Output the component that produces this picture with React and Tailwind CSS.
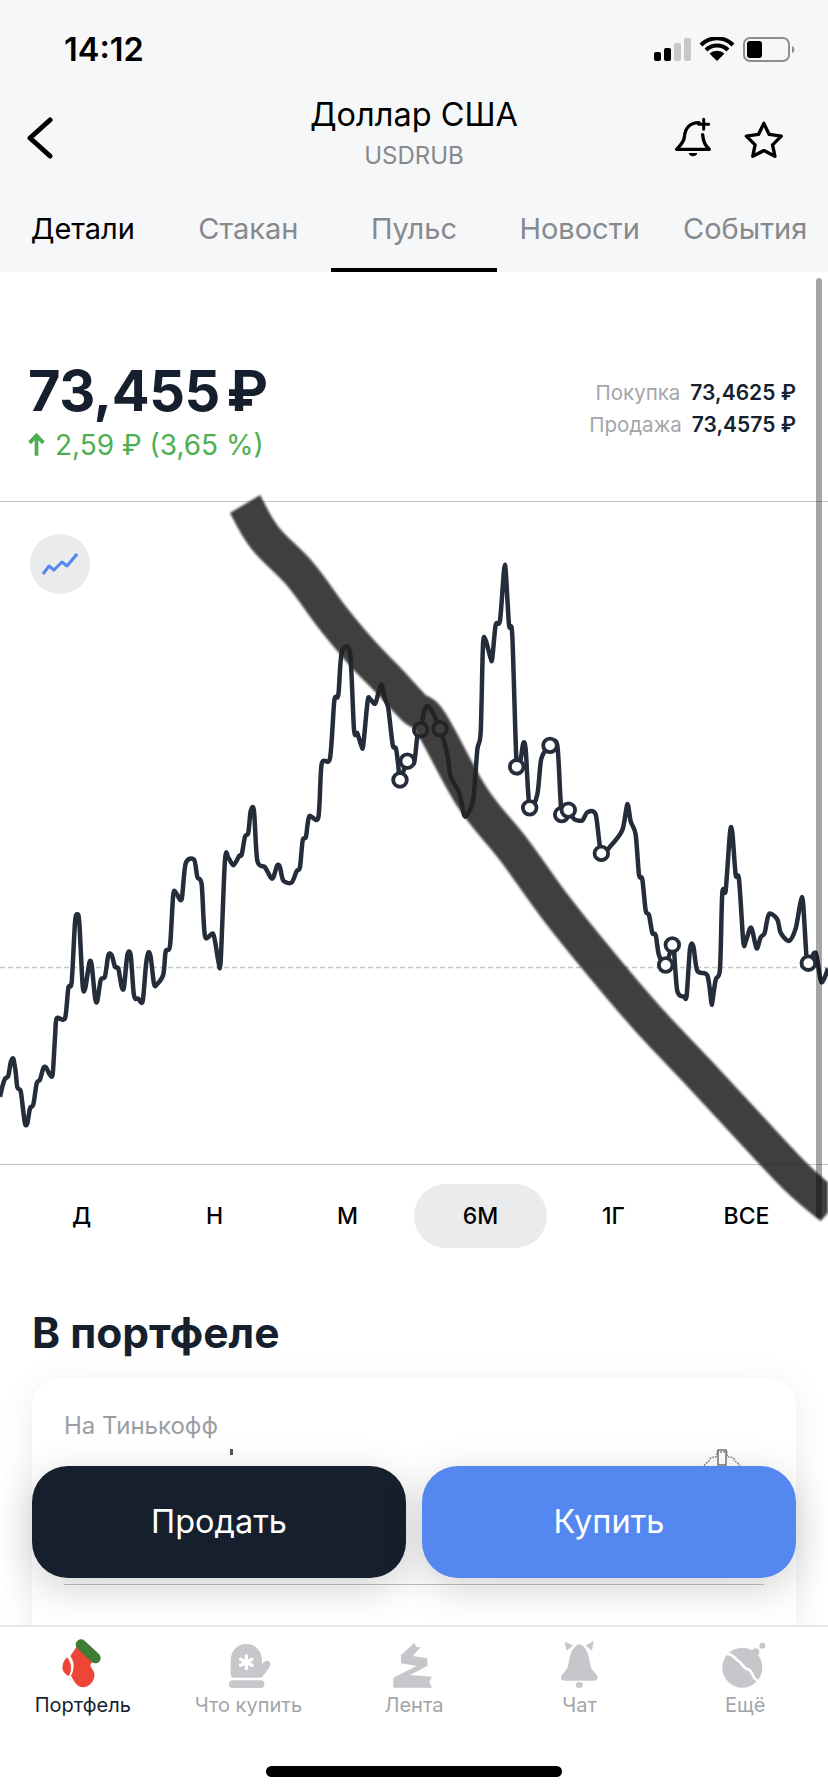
import React from "react";

const z5 = [[0,1455],[8,1425],[15,1408],[25,1400],[32,1365],[40,1355],[47,1390],[52,1430],[62,1440],[68,1480],[75,1525],[82,1525],[90,1485],[100,1475],[110,1420],[120,1410],[130,1380],[138,1378],[150,1398],[158,1395],[165,1300],[170,1250],[195,1250],[205,1170],[215,1155],[225,1000],[232,978],[238,1000],[248,1165],[256,1170],[268,1105],[275,1110],[285,1195],[292,1205],[302,1150],[315,1140],[325,1085],[335,1085],[345,1115],[355,1120],[365,1168],[372,1168],[382,1085],[392,1085],[402,1190],[415,1198],[428,1205],[438,1110],[445,1078],[452,1090],[462,1160],[470,1162],[490,1135],[497,1075],[510,1060],[520,925],[530,925],[545,938],[557,845],[582,835],[592,880],[605,900],[615,1035],[640,1030],[655,1100],[662,1100],[675,835],[685,830],[700,850],[718,825],[725,822],[735,775],[745,765],[752,708],[762,708],[772,838],[795,855],[812,882],[820,882],[832,850],[840,855],[850,890],[875,895],[890,865],[900,855],[908,785],[918,775],[928,722],[955,725],[965,585],[990,570],[1003,420],[1015,405],[1025,295],[1050,295],[1062,495],[1072,505],[1085,540],[1090,535],[1103,420],[1110,415],[1125,428],[1135,400],[1145,378],[1155,415],[1165,440],[1178,535],[1188,545],[1195,590],[1200,627],[1222,578]];
const z6 = [[0,500],[10,440],[20,425],[30,385],[40,372],[55,385],[78,423],[100,480],[110,530],[135,565],[150,615],[160,615],[178,580],[190,470],[200,430],[207,235],[215,225],[230,265],[235,265],[245,190],[258,180],[270,68],[275,68],[285,190],[295,215],[308,508],[320,490],[328,455],[335,470],[347,600],[370,570],[382,490],[408,460],[430,460],[443,615],[463,605],[480,625],[505,628],[520,610],[545,615],[562,702],[590,685],[625,650],[640,592],[650,630],[665,660],[675,750],[685,760],[695,830],[705,840],[715,880],[725,885],[735,930],[755,952],[775,907],[780,920],[790,1010],[810,1023],[818,1020],[828,915],[838,910],[850,965],[880,975],[892,1035],[895,1035],[905,985],[918,960],[925,790],[935,785],[948,655],[955,655],[965,750],[975,760],[988,900],[995,900],[1008,870],[1015,875],[1028,915],[1040,890],[1052,880],[1065,838],[1090,850],[1100,880],[1125,898],[1145,870],[1160,810],[1167,810],[1178,940],[1183,948],[1205,925],[1222,990],[1242,960]];
const m5 = ([x, y]) => [x / 3, 540 + y / 2.613];
const m6 = ([x, y]) => [414 + x / 3, 540 + y / 2.24];
const chartPts = [...z5.map(m5), ...z6.map(m6)];
const circles = [[1200,627],[1222,578]].map(m5).concat([[20,425],[78,423],[308,508],[347,600],[408,460],[443,615],[463,605],[562,702],[755,952],[775,907],[1183,948]].map(m6));
const markerPts = [[245,504],[265,538],[300,574],[332,617],[362,653],[390,682],[414,708],[431,723],[472,797],[514,850],[556,908],[601,964],[647,1018],[697,1071],[747,1125],[797,1178],[832,1208]];

function smooth(pts, t = 0.14) {
  let d = `M${pts[0][0].toFixed(1)} ${pts[0][1].toFixed(1)}`;
  for (let i = 0; i < pts.length - 1; i++) {
    const p0 = pts[Math.max(0, i - 1)], p1 = pts[i], p2 = pts[i + 1], p3 = pts[Math.min(pts.length - 1, i + 2)];
    const c1 = [p1[0] + (p2[0] - p0[0]) * t, p1[1] + (p2[1] - p0[1]) * t];
    const c2 = [p2[0] - (p3[0] - p1[0]) * t, p2[1] - (p3[1] - p1[1]) * t];
    d += `C${c1[0].toFixed(1)} ${c1[1].toFixed(1)} ${c2[0].toFixed(1)} ${c2[1].toFixed(1)} ${p2[0].toFixed(1)} ${p2[1].toFixed(1)}`;
  }
  return d;
}

const Gray = "#c5c7ca";
const NavSvg = ({ vb, children }) => (
  <svg width="60" height="56" viewBox={vb}>{children}</svg>
);

const navItems = [
  { label: "Портфель", active: true, icon: (
    <NavSvg vb="8 12 180 168">
      <path d="M82 46L126 96C112 108 128 115 132 130C135 155 115 172 98 172C80 172 72 155 62 138C74 115 72 95 60 78Z" fill="#ee4536" />
      <path d="M50 82C38 92 32 115 40 125C45 132 50 136 56 138C66 118 64 98 50 82Z" fill="#ee4536" />
      <path d="M92 44L135 84" stroke="#3f7d35" strokeWidth="32" strokeLinecap="round" />
    </NavSvg>
  )},
  { label: "Что купить", icon: (
    <NavSvg vb="505 12 180 168">
      <path d="M543 133V92C543 60 565 42 590 42C615 42 636 60 637 92V104C645 88 662 90 662 102C662 112 650 126 640 137C638 141 634 143 630 143H552C546 143 543 139 543 133Z" fill={Gray} />
      <rect x="538" y="151" width="106" height="23" rx="11.5" fill={Gray} />
      <path d="M590 78V116M573 88L607 106M573 106L607 88" stroke="#fff" strokeWidth="10" strokeLinecap="round" />
    </NavSvg>
  )},
  { label: "Лента", icon: (
    <NavSvg vb="42 12 180 168">
      <path d="M133 38L138 50L152 52L128 78L172 85V108L120 135L186 140L178 155L186 173H70V143L140 108L93 100V75Z" fill={Gray} />
    </NavSvg>
  )},
  { label: "Чат", icon: (
    <NavSvg vb="539 12 180 168">
      <path d="M627 42C650 50 655 75 660 105C663 125 682 130 682 143C682 150 675 152 670 152H584C577 152 571 150 572 143C572 130 590 125 594 105C598 75 605 50 627 42Z" fill={Gray} />
      <ellipse cx="627" cy="165" rx="11" ry="9" fill={Gray} />
      <path d="M585 37L606 47L590 60ZM668 35L648 47L664 60Z" fill={Gray} stroke={Gray} strokeWidth="3" strokeLinejoin="round" />
    </NavSvg>
  )},
  { label: "Ещё", icon: (
    <NavSvg vb="1036 12 180 168">
      <circle cx="1118" cy="113" r="60" fill={Gray} />
      <circle cx="1158" cy="66" r="11" fill={Gray} />
      <circle cx="1178" cy="47" r="9" fill={Gray} />
      <path d="M1068 72C1090 70 1095 85 1105 92C1120 100 1118 115 1135 118C1150 122 1145 140 1160 150L1172 158" fill="none" stroke="#fff" strokeWidth="8" />
    </NavSvg>
  )},
];

const tabs = ["Детали", "Стакан", "Пульс", "Новости", "События"];
const ranges = ["Д", "Н", "М", "6М", "1Г", "ВСЕ"];

export default function App() {
  return (
    <div className="relative w-[828px] h-[1792px] overflow-hidden bg-white flex flex-col font-['Inter',sans-serif] text-[#161f2d]">
      <header className="bg-[#f6f7f9] shrink-0">
        <div className="h-[96px] flex items-center justify-between pl-[64px] pr-[14px]">
          <span className="text-[32.5px] font-semibold leading-none text-black pt-[4px]">14:12</span>
          <svg width="160" height="28" viewBox="0 0 160 28" className="mt-[6px]">
            <rect x="0" y="15" width="7" height="9" rx="2" fill="#000" />
            <rect x="10" y="11" width="7" height="13" rx="2" fill="#000" />
            <rect x="20" y="6" width="7" height="18" rx="2" fill="#c6c7c9" />
            <rect x="30" y="1" width="7" height="23" rx="2" fill="#c6c7c9" />
            <path d="M47 8C56 -1 70 -1 79 8M52 13C58 7 68 7 74 13M57 18C60 15 66 15 69 18" fill="none" stroke="#000" strokeWidth="4" />
            <path d="M58 19L63 24L68 19C65 16 61 16 58 19Z" fill="#000" />
            <rect x="90" y="1" width="45" height="23" rx="6" fill="none" stroke="#8e8e8e" strokeWidth="2" />
            <rect x="93" y="4" width="15" height="17" rx="3" fill="#000" />
            <path d="M138 9C141 10 141.500 15 138 16Z" fill="#8e8e8e" />
          </svg>
        </div>
        <div className="h-[84px] grid grid-cols-[1fr_auto_1fr] items-center pl-[27px] pr-[43px]">
          <svg width="26" height="42" viewBox="0 0 26 42" className="mb-[6px]">
            <path d="M23 3L3 21L23 39" fill="none" stroke="#000" strokeWidth="5" strokeLinecap="round" strokeLinejoin="round" />
          </svg>
          <div className="flex flex-col items-center pb-[14px] mr-[-16px]">
            <div className="text-[32.5px] leading-[38px] text-black">Доллар США</div>
            <div className="text-[24px] leading-[30px] text-[#87898c] mt-[7px]">USDRUB</div>
          </div>
          <div className="flex justify-end items-center gap-[30px] pb-[2px]">
            <svg width="40" height="44" viewBox="90 290 120 130" className="mb-[5px]">
              <path d="M168 312C140 312 126 330 124 355C122 375 107 382 101 392H199C190 382 181 375 179 348" fill="none" stroke="#000" strokeWidth="10" strokeLinecap="round" strokeLinejoin="round" />
              <path d="M182 302V332M167 317H197" stroke="#000" strokeWidth="9" strokeLinecap="round" />
              <path d="M137 403H163C160 416 140 416 137 403Z" fill="#000" />
            </svg>
            <svg width="42" height="41" viewBox="310 295 125 120">
              <path d="M372 307L388 340L424 345L398 371L405 405L372 388L339 405L346 371L320 345L356 340Z" fill="none" stroke="#000" strokeWidth="10" strokeLinejoin="round" />
            </svg>
          </div>
        </div>
        <div className="h-[92px] grid grid-cols-5">
          {tabs.map((t, i) => (
            <div key={t} className={`flex items-center justify-center pt-[10px] border-b-4 text-[29px] ${i === 2 ? "border-black text-[#87898c]" : "border-transparent"} ${i === 0 ? "text-black" : "text-[#87898c]"}`}>{t}</div>
          ))}
        </div>
      </header>

      <main className="flex-1 min-h-0 overflow-hidden">
        <section className="h-[229px] flex justify-between pl-[28px] pr-[32px] pt-[85px]">
          <div>
            <div className="text-[56px] leading-[68px] font-bold [word-spacing:-6px] tracking-[-0.5px]">73,455 ₽</div>
            <div className="flex items-center gap-[10px] text-[28px] leading-[36px] text-[#4caf50] mt-[2px]">
              <svg width="17" height="24" viewBox="0 0 16 22" className="shrink-0">
                <path d="M8 21V3M1.500 9L8 2L14.500 9" fill="none" stroke="#4caf50" strokeWidth="3.500" />
              </svg>
              <span>2,59 ₽ (3,65 %)</span>
            </div>
          </div>
          <div className="flex flex-col gap-[4px] pt-[22px] text-[20.5px] leading-[28px]">
            <div className="flex justify-end gap-[10px]"><span className="text-[#a3a6a9]">Покупка</span><span className="font-semibold text-[21px]">73,4625 ₽</span></div>
            <div className="flex justify-end gap-[10px]"><span className="text-[#a3a6a9]">Продажа</span><span className="font-semibold text-[21px]">73,4575 ₽</span></div>
          </div>
        </section>

        <section className="relative h-[664px] border-y border-[#c4c4c4]">
          <div className="absolute left-[30px] top-[32px] w-[60px] h-[60px] rounded-full bg-[#e9ebed] flex items-center justify-center">
            <svg width="36" height="24" viewBox="0 0 36 24">
              <path d="M1 22L7 14L12 18L20 10L25 14L35 2" fill="none" stroke="#5487f0" strokeWidth="3" strokeLinejoin="round" />
            </svg>
          </div>
          <svg width="828" height="662" viewBox="0 502 828 662" className="block">
            <path d="M0 967.500H828" stroke="#c8c8c8" strokeWidth="1.500" strokeDasharray="5 3" />
            <path d={smooth(chartPts)} fill="none" stroke="#252d3b" strokeWidth="4.500" strokeLinejoin="round" />
            {circles.map(([x, y], i) => (
              <circle key={i} cx={x} cy={y} r="6.800" fill="#fff" stroke="#252d3b" strokeWidth="3.800" />
            ))}
          </svg>
        </section>

        <section className="grid grid-cols-6 px-[15px] pt-[19px]">
          {ranges.map((r) => (
            <div key={r} className={`h-[64px] flex items-center justify-center text-[23px] font-medium text-black rounded-full ${r === "6М" ? "bg-[#e9ebed]" : ""}`}>{r}</div>
          ))}
        </section>

        <section className="px-[32px]">
          <h2 className="mt-[60px] text-[42.5px] leading-[50px] font-bold">В портфеле</h2>
          <div className="mt-[20px] h-[330px] rounded-[28px] bg-white shadow-[0_6px_36px_rgba(0,0,0,0.08)] px-[32px] pt-[32px]">
            <div className="text-[24px] leading-[32px] text-[#9a9ea3]">На Тинькофф</div>
            <div className="flex justify-between h-[142px] pt-[7px] pl-[166px] pr-[22px]">
              <div className="w-[3px] h-[6px] bg-[#555]" />
              <svg width="40" height="22" viewBox="0 0 40 22">
                <path d="M2 20C1 14 7 14 8 10C10 7 14 9 15 7V3H25V7C26 9 30 7 32 10C33 14 39 14 38 20" fill="none" stroke="#888" strokeWidth="1.500" strokeDasharray="2 1" />
                <rect x="16" y="1" width="8" height="15" fill="none" stroke="#777" strokeWidth="1.500" />
              </svg>
            </div>
            <div className="border-t border-[#c0c0c0]" />
          </div>
        </section>
      </main>

      <nav className="shrink-0 h-[167px] bg-white border-t-2 border-[#e6e6e6] relative z-10">
        <div className="grid grid-cols-5 pt-[7px]">
          {navItems.map((n) => (
            <div key={n.label} className="flex flex-col items-center">
              {n.icon}
              <span className={`mt-[1px] text-[20px] leading-[28px] ${n.active ? "text-[#161f2d]" : "text-[#a3a6a9]"}`}>{n.label}</span>
            </div>
          ))}
        </div>
        <div className="mt-[47px] mx-auto w-[296px] h-[11px] rounded-full bg-black" />
      </nav>

      <div className="absolute left-[32px] right-[32px] top-[1466px] h-[112px] grid grid-cols-2 gap-[16px] z-10">
        <button className="rounded-[36px] bg-[#161f2d] text-white text-[32.5px] shadow-[0_10px_40px_rgba(0,0,0,0.18)]">Продать</button>
        <button className="rounded-[36px] bg-[#5487f0] text-white text-[32.5px] shadow-[0_10px_40px_rgba(0,0,0,0.18)]">Купить</button>
      </div>

      <svg width="828" height="1792" viewBox="0 0 828 1792" className="absolute left-0 top-0 pointer-events-none z-20 blur-[1px]">
        <path d={smooth(markerPts, 0.18)} fill="none" stroke="#222" strokeOpacity="0.87" strokeWidth="35" />
      </svg>
      <div className="absolute left-[816px] top-[278px] w-[6px] h-[940px] rounded-full bg-black/35 z-20" />
    </div>
  );
}
